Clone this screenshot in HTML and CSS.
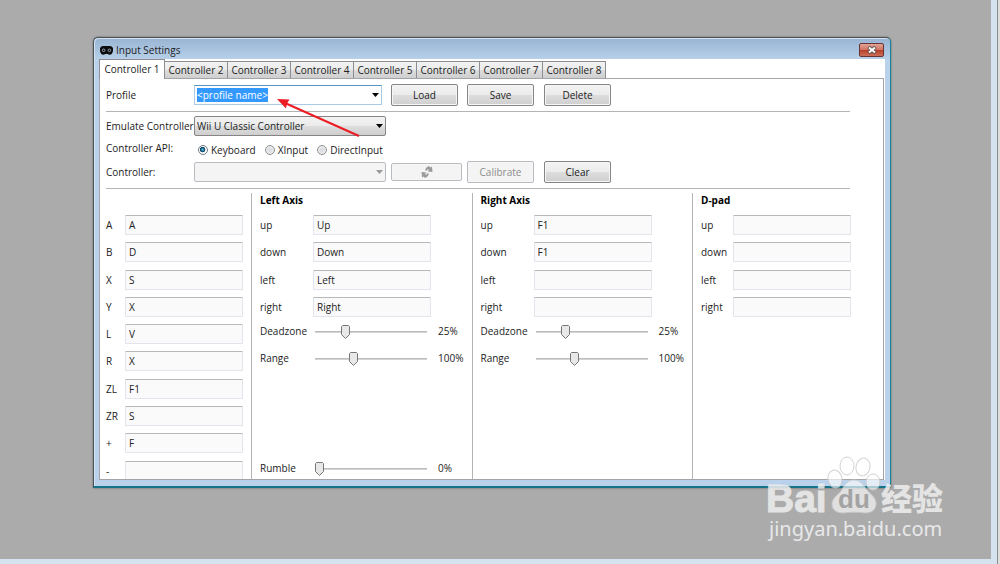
FILE: index.html
```html
<!DOCTYPE html>
<html lang="en">
<head>
	<meta charset="UTF-8">
	<title>Input Settings</title>
	<link rel="stylesheet" href="styles.css">
</head>
<body>
	<main class="desktop">
		<section class="window">
			<header class="titlebar">
				<svg class="pad-icon" width="13" height="9" viewBox="0 0 13 9">
					<path d="M3.500 0h6a3.500 3.500 0 0 1 3.500 4.500c-.2 2.500-1.400 4.300-3.300 4.300-1.300 0-1.900-1-3.200-1s-1.900 1-3.200 1C1.400 8.800.2 7 0 4.500A3.500 3.500 0 0 1 3.500 0z" fill="#0c0c0c"/>
					<circle cx="3.600" cy="4.300" r="1.300" fill="none" stroke="#a9bfd6" stroke-width=".8"/>
					<circle cx="9.400" cy="4.300" r="1.300" fill="none" stroke="#a9bfd6" stroke-width=".8"/>
				</svg>
				<h1>Input Settings</h1>
				<button class="close" type="button" aria-label="Close">
					<svg width="10" height="8" viewBox="0 0 10 8">
						<path d="M1.500 1l7 6M8.500 1l-7 6" stroke="#5b4a4a" stroke-width="3.600"/>
						<path d="M2 1.400l6 5.200M8 1.400l-6 5.200" stroke="#fff" stroke-width="2"/>
					</svg>
				</button>
			</header>
			<div class="client">
				<div class="tabs" role="tablist">
					<button class="selected" type="button" role="tab" aria-selected="true">Controller 1</button>
					<button type="button" role="tab">Controller 2</button>
					<button type="button" role="tab">Controller 3</button>
					<button type="button" role="tab">Controller 4</button>
					<button type="button" role="tab">Controller 5</button>
					<button type="button" role="tab">Controller 6</button>
					<button type="button" role="tab">Controller 7</button>
					<button type="button" role="tab">Controller 8</button>
				</div>
				<div class="panel">
					<div class="row profile">
						<label for="profile">Profile</label>
						<div class="combo">
							<input id="profile" type="text" value="&lt;profile name&gt;" size="12" spellcheck="false">
							<button type="button" aria-label="Show profiles"></button>
						</div>
						<button class="btn" type="button">Load</button>
						<button class="btn" type="button">Save</button>
						<button class="btn" type="button">Delete</button>
					</div>
					<div class="device">
						<div class="row">
							<label for="emulate">Emulate Controller</label>
							<select id="emulate">
								<option>Wii U Classic Controller</option>
							</select>
						</div>
						<div class="row api">
							<span>Controller API:</span>
							<div class="radios">
								<label><input type="radio" name="api" checked>Keyboard</label>
								<label><input type="radio" name="api">XInput</label>
								<label><input type="radio" name="api">DirectInput</label>
							</div>
						</div>
						<div class="row">
							<label for="controller">Controller:</label>
							<select id="controller" disabled></select>
							<button class="btn refresh" type="button" aria-label="Refresh" disabled>
								<svg width="12" height="12" viewBox="0 0 12 12" fill="#9a9a9a">
									<path d="M5.500 1.500L8 0l1.500 1.500L11 .5 11.500 6 6.500 5.500 8 4 7 3.200 5 5 4.200 3.800z"/>
									<path d="M6.500 10.500L4 12l-1.500-1.500L1 11.500.5 6l5 .5L4 8l1 .8L7 7l.8 1.200z"/>
								</svg>
							</button>
							<button class="btn" type="button" disabled>Calibrate</button>
							<button class="btn" type="button">Clear</button>
						</div>
					</div>
					<div class="mapping">
						<section class="col buttons">
							<h2></h2>
							<div class="fields">
								<div class="field"><label for="a">A</label><input id="a" type="text" value="A"></div>
								<div class="field"><label for="b">B</label><input id="b" type="text" value="D"></div>
								<div class="field"><label for="x">X</label><input id="x" type="text" value="S"></div>
								<div class="field"><label for="y">Y</label><input id="y" type="text" value="X"></div>
								<div class="field"><label for="l">L</label><input id="l" type="text" value="V"></div>
								<div class="field"><label for="r">R</label><input id="r" type="text" value="X"></div>
								<div class="field"><label for="zl">ZL</label><input id="zl" type="text" value="F1"></div>
								<div class="field"><label for="zr">ZR</label><input id="zr" type="text" value="S"></div>
								<div class="field"><label for="plus">+</label><input id="plus" type="text" value="F"></div>
								<div class="field"><label for="minus">-</label><input id="minus" type="text"></div>
							</div>
						</section>
						<section class="col axis">
							<h2>Left Axis</h2>
							<div class="fields">
								<div class="field"><label for="l-up">up</label><input id="l-up" type="text" value="Up"></div>
								<div class="field"><label for="l-down">down</label><input id="l-down" type="text" value="Down"></div>
								<div class="field"><label for="l-left">left</label><input id="l-left" type="text" value="Left"></div>
								<div class="field"><label for="l-right">right</label><input id="l-right" type="text" value="Right"></div>
								<div class="field slider"><label for="l-dead">Deadzone</label><input id="l-dead" type="range" value="25"><output>25%</output></div>
								<div class="field slider"><label for="l-range">Range</label><input id="l-range" type="range" min="50" max="200" value="100"><output>100%</output></div>
								<div class="field slider rumble"><label for="rumble">Rumble</label><input id="rumble" type="range" value="0"><output>0%</output></div>
							</div>
						</section>
						<section class="col axis">
							<h2>Right Axis</h2>
							<div class="fields">
								<div class="field"><label for="r-up">up</label><input id="r-up" type="text" value="F1"></div>
								<div class="field"><label for="r-down">down</label><input id="r-down" type="text" value="F1"></div>
								<div class="field"><label for="r-left">left</label><input id="r-left" type="text"></div>
								<div class="field"><label for="r-right">right</label><input id="r-right" type="text"></div>
								<div class="field slider"><label for="r-dead">Deadzone</label><input id="r-dead" type="range" value="25"><output>25%</output></div>
								<div class="field slider"><label for="r-range">Range</label><input id="r-range" type="range" min="50" max="200" value="100"><output>100%</output></div>
							</div>
						</section>
						<section class="col dpad">
							<h2>D-pad</h2>
							<div class="fields">
								<div class="field"><label for="d-up">up</label><input id="d-up" type="text"></div>
								<div class="field"><label for="d-down">down</label><input id="d-down" type="text"></div>
								<div class="field"><label for="d-left">left</label><input id="d-left" type="text"></div>
								<div class="field"><label for="d-right">right</label><input id="d-right" type="text"></div>
							</div>
						</section>
					</div>
				</div>
			</div>
			<svg class="pointer" width="84" height="40" viewBox="0 0 84 40">
				<path d="M8 4l74 33" stroke="#ec1c24" stroke-width="2"/>
				<path d="M0 0l12.500 .5-2.500 4-1 5z" fill="#ec1c24"/>
			</svg>
		</section>
		<svg class="watermark" width="184" height="88" viewBox="0 0 184 88">
			<g fill="#fff" fill-opacity=".75" stroke="#ccc">
				<ellipse cx="69" cy="24" rx="7" ry="9" transform="rotate(-12 69 24)"/>
				<ellipse cx="81" cy="11" rx="7" ry="9"/>
				<ellipse cx="97" cy="12" rx="7" ry="9" transform="rotate(12 97 12)"/>
				<ellipse cx="107" cy="27" rx="7" ry="8"/>
				<path d="M88 25c7 0 10 6 13 10 4 5 10 8 9 15-1 7-7 8-12 8-4-1-16-1-20 0-6 0-12-2-12-9 0-6 6-9 9-13 3-5 6-11 13-11z"/>
			</g>
			<text class="mark" x="0" y="57">Bai</text>
			<text class="mark-du" x="72" y="53">du</text>
			<text class="mark-cn" x="115" y="55">经验</text>
			<text class="mark-url" x="3" y="81">jingyan.baidu.com</text>
		</svg>
	</main>
	<script>
		//profile name starts out selected, ready to be typed over
		var oProfile = document.getElementById('profile');
		oProfile.focus();
		oProfile.select();
	</script>
</body>
</html>
```

FILE: styles.css
```css
*{
	margin: 0;
	padding: 0;
	box-sizing: border-box;
}
body{
	min-height: 100vh;
	display: flex;
	padding: 0 6px 5px 0;
	border-right: 2px solid #dedede;
	box-shadow: inset -1px 0 #8c8c8c;
	background: #d5e3f0;
	font: 10px/14px "Open Sans", "Noto Sans", sans-serif;
	color: #222;
}
button, input, select{
	font: inherit;
	color: inherit;
}
.desktop{
	flex: 1;
	position: relative;
	margin-right: 1px;
	padding: 37px 100px 60px 93px;
	background: #ababab;
}

/* window frame */
.window{
	position: relative;
	border: 1px solid #4c5358;
	border-right-color: #12879c;
	border-bottom: 2px solid #157287;
	border-radius: 5px 5px 0 0;
	padding: 0 5px 6px;
	background: linear-gradient(#98b4d2, #b9d1ea 22px);
	box-shadow: inset 1px 1px #d4e3f2, 0 0 2px #555;
}
.titlebar{
	display: flex;
	align-items: center;
	height: 21px;
	padding: 3px 1px 0;
}
.titlebar h1{
	flex: 1;
	margin-left: 3px;
	font-size: 10px;
	font-weight: normal;
}
.close{
	display: flex;
	align-items: center;
	justify-content: center;
	width: 25px;
	height: 14px;
	border: 1px solid #6b3434;
	border-radius: 2px;
	background: linear-gradient(#e2a596, #cf7262 50%, #b83e29 50%, #cb6e59);
}
.client{
	background: #fff;
	padding-right: 1px;
}

/* tabs */
.tabs{
	display: flex;
	align-items: flex-end;
	height: 19px;
}
.tabs button{
	width: 64px;
	height: 17px;
	margin-right: -1px;
	border: 1px solid #8c8e94;
	border-bottom: 0;
	background: linear-gradient(#f2f2f2, #ebebeb 50%, #ddd 50%, #cfcfcf);
	white-space: nowrap;
	text-align: center;
}
.tabs .selected{
	z-index: 1;
	width: 66px;
	height: 20px;
	margin-bottom: -1px;
	padding-bottom: 2px;
	background: #fff;
}
.panel{
	overflow: hidden;
	padding: 5px 33px 0 6px;
	border: 1px solid #a2a4aa;
}

/* top rows */
.row{
	display: grid;
	grid-template-columns: 88px 197px 76px 77px 67px;
	align-items: center;
}
.row > label{
	white-space: nowrap;
}
.profile{
	padding-bottom: 5px;
	border-bottom: 1px solid #b4b4b4;
}
.combo{
	display: flex;
	align-items: center;
	width: 188px;
	height: 20px;
	padding-left: 2px;
	border: 1px solid #a9cbe8;
	border-top-color: #5794bf;
}
.combo input{
	flex: 1;
	min-width: 0;
	height: 14px;
	border: 0;
	outline: 0;
	background: none;
}
.combo input::selection{
	background: #39f;
	color: #fff;
}
.combo button{
	width: 12px;
	height: 18px;
	border: 0;
	background: url("data:image/svg+xml,%3Csvg xmlns='http://www.w3.org/2000/svg' width='7' height='4'%3E%3Cpath d='M0 0h7L3.500 4z'/%3E%3C/svg%3E") no-repeat center;
}
.btn{
	width: 67px;
	height: 22px;
	border: 1px solid #858585;
	border-radius: 2px;
	background: linear-gradient(#f3f3f3, #ebebeb 50%, #ddd 50%, #cfcfcf);
	box-shadow: inset 0 0 0 1px #f6f6f6;
}
.btn:disabled{
	border-color: #b8bcc0;
	background: #f4f4f4;
	color: #8c8c8c;
}
.refresh{
	display: flex;
	align-items: center;
	justify-content: center;
	width: 71px;
	height: 18px;
}
.device{
	padding: 4px 0 5px;
	border-bottom: 1px solid #b4b4b4;
}
select{
	appearance: none;
	width: 192px;
	height: 20px;
	padding-left: 2px;
	border: 1px solid #858585;
	border-radius: 2px;
	background: url("data:image/svg+xml,%3Csvg xmlns='http://www.w3.org/2000/svg' width='7' height='4'%3E%3Cpath d='M0 0h7L3.500 4z'/%3E%3C/svg%3E") no-repeat right 2px center, linear-gradient(#f3f3f3, #ebebeb 50%, #ddd 50%, #cfcfcf);
}
select:disabled{
	border-color: #b8bcc0;
	background: #f4f4f4 url("data:image/svg+xml,%3Csvg xmlns='http://www.w3.org/2000/svg' width='7' height='4'%3E%3Cpath fill='%23999' d='M0 0h7L3.500 4z'/%3E%3C/svg%3E") no-repeat right 2px center;
	opacity: 1;
}
.api{
	align-items: start;
	height: 25px;
	padding-top: 5px;
}
.radios{
	display: flex;
	gap: 9px;
	padding: 2px 0 0 4px;
}
.radios label{
	display: flex;
	align-items: center;
	gap: 3px;
}
.radios input{
	appearance: none;
	width: 10px;
	height: 10px;
	border: 1px solid #8e8f8f;
	border-radius: 50%;
	background: radial-gradient(#d4d8dc, #f6f6f6);
}
.radios input:checked{
	border-color: #6f7a84;
	background: radial-gradient(circle at 45% 45%, #5cc4ee, #0c3e5e 38%, #fff 50%);
}

/* key mapping */
.mapping{
	display: grid;
	grid-template-columns: 145px 1fr 1fr 159px;
	height: 286px;
	margin-top: 4px;
	margin-right: -1px;
}
.col + .col{
	padding-left: 8px;
	border-left: 1px solid #b4b4b4;
}
.col h2{
	height: 22px;
	font-size: 10px;
	color: #000;
}
.fields{
	display: grid;
	grid-template-rows: repeat(10, 1fr);
	height: 273px;
}
.field{
	display: grid;
	grid-template-columns: 53px 118px 1fr;
	align-items: start;
}
.buttons .field{
	grid-template-columns: 19px 118px;
}
.dpad .field{
	grid-template-columns: 32px 118px;
}
.field label{
	line-height: 20px;
}
.field input[type=text]{
	width: 118px;
	height: 20px;
	padding-left: 3px;
	border: 1px solid #e2e5ec;
	border-top-color: #b6b8bc;
	border-radius: 1px;
	background: #fafafa;
}
.field.slider label, .field output{
	line-height: 14px;
}
.field output{
	padding-left: 7px;
}
.rumble{
	grid-row: 10;
}
input[type=range]{
	appearance: none;
	width: 112px;
	height: 16px;
	margin-left: 2px;
	background: linear-gradient(#b0b0b0, #e0e0e0) no-repeat center / 100% 2px;
}
input[type=range]::-webkit-slider-thumb{
	appearance: none;
	width: 9px;
	height: 14px;
	background: url("data:image/svg+xml,%3Csvg xmlns='http://www.w3.org/2000/svg' width='9' height='14'%3E%3Cpath d='M1.500 .5h6l1 1v8l-4 4-4-4v-8z' fill='%23e8e8e8' stroke='%23777'/%3E%3C/svg%3E") no-repeat;
}

/* overlays */
.pointer{
	position: absolute;
	left: 183px;
	top: 61px;
}
.watermark{
	position: absolute;
	right: 41px;
	bottom: 16px;
	opacity: .85;
}
.mark{
	font: bold 39px "Liberation Sans", sans-serif;
	fill: #eee;
	stroke: #eee;
}
.mark-du{
	font: bold 26px "Liberation Sans", sans-serif;
	fill: #a2a2a2;
}
.mark-cn{
	font: 900 31px "Noto Sans CJK SC", sans-serif;
	fill: #eee;
}
.mark-url{
	font: 20px "Noto Sans", sans-serif;
	fill: #f4f4f4;
}
```
